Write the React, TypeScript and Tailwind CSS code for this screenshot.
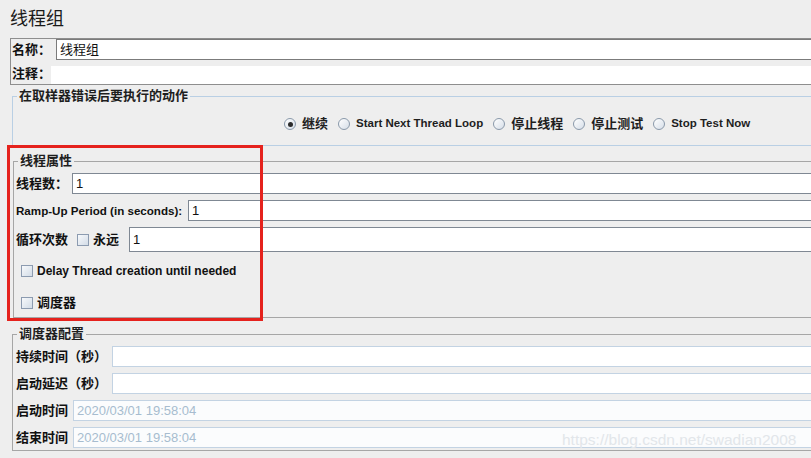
import type { ReactNode } from "react"

const font = "font-['Liberation_Sans','Noto_Sans_CJK_SC',sans-serif]"

function Radio({ checked, label, cjk }: { checked?: boolean; label: string; cjk?: boolean }) {
  return (
    <div className="flex items-center gap-[6px]">
      <span className="flex h-[12px] w-[12px] items-center justify-center rounded-full border border-[#8a99aa] bg-gradient-to-br from-[#ffffff] to-[#d6dee8]">
        {checked && <span className="h-[5px] w-[5px] rounded-full bg-[#2b2b2b]" />}
      </span>
      <span className={`${cjk ? "text-[13px]" : "text-[11.5px]"} font-bold text-[#1e1e1e]`}>{label}</span>
    </div>
  )
}

function Checkbox() {
  return <span className="block h-[12px] w-[12px] shrink-0 border border-[#8c9bb0] bg-gradient-to-br from-[#f7f9fb] to-[#d3dce7]" />
}

function Group({ title, blue, className, children }: { title: string; blue?: boolean; className: string; children: ReactNode }) {
  return (
    <fieldset className={`w-[830px] border border-r-0 ${blue ? "border-[#b9cfe4]" : "border-[#a6a6a6]"} ${className}`}>
      <legend className="ml-[4px] px-[2px] text-[13px] leading-[16px] font-bold text-[#1e1e1e]">{title}</legend>
      {children}
    </fieldset>
  )
}

function Field({ value, className, disabled }: { value: string; className: string; disabled?: boolean }) {
  return (
    <div
      className={`flex flex-1 items-center border border-r-0 pl-[3px] text-[13px] ${
        disabled ? "border-[#c3d3e3] bg-[#fbfcfd] text-[#a7bccf]" : "bg-white text-[#111]"
      } ${className}`}
    >
      {value}
    </div>
  )
}

export default function App() {
  return (
    <div className={`relative flex h-[458px] w-[811px] flex-col overflow-hidden bg-[#eeeeee] ${font}`}>
      {/* title */}
      <div className="h-[38px] pl-[10px] pt-[8px] text-[18px] leading-[22px] text-[#1a1a1a]">线程组</div>

      {/* name / comment */}
      <div className="ml-[10px] flex w-[830px] flex-col border border-r-0 border-[#8e8e8e]">
        <div className="flex h-[22px] items-start">
          <span className="w-[45px] pl-[1px] text-[13px] leading-[21px] font-bold text-[#111]">名称：</span>
          <Field value="线程组" className="h-[21px] border-[#7b7b7b]" />
        </div>
        <div className="flex h-[23px] items-end">
          <span className="w-[40px] self-center pl-[1px] pt-[3px] text-[13px] font-bold text-[#111]">注释：</span>
          <div className="h-[18px] flex-1 bg-white" />
        </div>
      </div>

      <Group title="在取样器错误后要执行的动作" blue className="ml-[12px] mt-[3px]">
        <div className="mb-[9px] mt-[8px] flex h-[24px] items-center gap-[10px] pl-[271px]">
          <Radio checked cjk label="继续" />
          <Radio label="Start Next Thread Loop" />
          <Radio cjk label="停止线程" />
          <Radio cjk label="停止测试" />
          <Radio label="Stop Test Now" />
        </div>
      </Group>

      <Group title="线程属性" className="ml-[13px] mt-[7px]">
        <div className="mt-[4px] flex h-[21px] items-center">
          <span className="w-[58px] pl-[2px] text-[13px] font-bold text-[#111]">线程数：</span>
          <Field value="1" className="h-[21px] border-[#7f8893]" />
        </div>
        <div className="mt-[6px] flex h-[21px] items-center">
          <span className="w-[174px] shrink-0 whitespace-nowrap pl-[2px] text-[11.6px] font-bold text-[#111]">Ramp-Up Period (in seconds):</span>
          <Field value="1" className="h-[21px] border-[#7f8893]" />
        </div>
        <div className="mt-[6px] flex h-[25px] items-center">
          <span className="w-[63px] pl-[2px] text-[13px] font-bold text-[#111]">循环次数</span>
          <Checkbox />
          <span className="w-[40px] pl-[4px] text-[13px] font-bold text-[#111]">永远</span>
          <Field value="1" className="h-[25px] border-[#7f8893]" />
        </div>
        <div className="mt-[13px] flex h-[12px] items-center gap-[4px] pl-[7px]">
          <Checkbox />
          <span className="text-[12px] font-bold text-[#111]">Delay Thread creation until needed</span>
        </div>
        <div className="mb-[8px] mt-[20px] flex h-[12px] items-center gap-[4px] pl-[7px]">
          <Checkbox />
          <span className="text-[13px] font-bold text-[#111]">调度器</span>
        </div>
      </Group>

      <Group title="调度器配置" className="ml-[12px] mt-[8px]">
        <div className="mt-[4px] flex h-[21px] items-center">
          <span className="w-[99px] pl-[3px] text-[13px] font-bold text-[#111]">持续时间（秒）</span>
          <Field value="" className="h-[21px] border-[#c3d3e3]" />
        </div>
        <div className="mt-[6px] flex h-[21px] items-center">
          <span className="w-[99px] pl-[3px] text-[13px] font-bold text-[#111]">启动延迟（秒）</span>
          <Field value="" className="h-[21px] border-[#c3d3e3]" />
        </div>
        <div className="mt-[6px] flex h-[21px] items-center">
          <span className="w-[60px] pl-[3px] text-[13px] font-bold text-[#111]">启动时间</span>
          <Field value="2020/03/01 19:58:04" disabled className="h-[21px]" />
        </div>
        <div className="mb-[2px] mt-[6px] flex h-[21px] items-center">
          <span className="w-[60px] pl-[3px] text-[13px] font-bold text-[#111]">结束时间</span>
          <Field value="2020/03/01 19:58:04" disabled className="h-[21px]" />
        </div>
      </Group>

      {/* annotation + watermark */}
      <div className="absolute left-[7px] top-[145px] h-[176px] w-[256px] border-[3px] border-[#e5221d]" />
      <div className="absolute left-[562px] top-[430px] text-[15.5px] leading-[20px] text-[#e2e6ea]">https://blog.csdn.net/swadian2008</div>
    </div>
  )
}
